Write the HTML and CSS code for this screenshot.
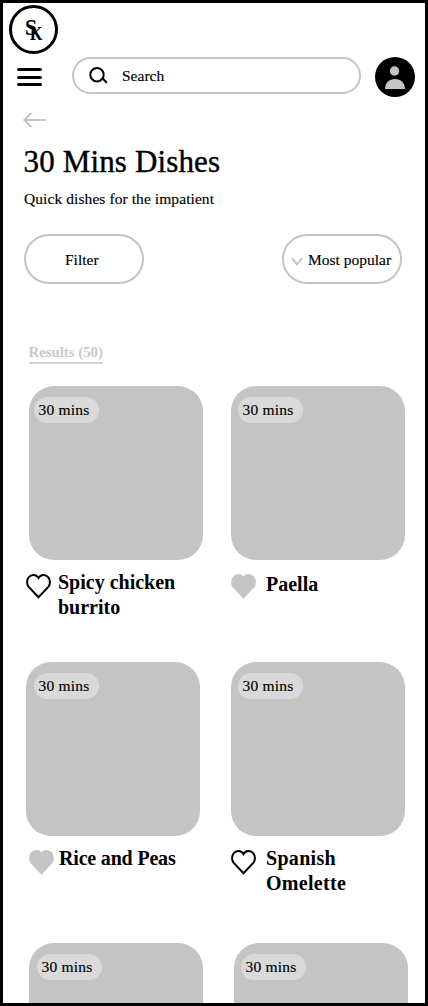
FILE: index.html
```html
<!DOCTYPE html>
<html lang="en">
<head>
<meta charset="utf-8">
<title>30 Mins Dishes</title>
<link rel="stylesheet" href="styles.css">
</head>
<body>
<svg class="defs" width="0" height="0">
  <symbol id="heart" viewBox="0 0 25 26"><path d="M12.5 24.3 2.5 13.6C.6 11.3.5 7 2.6 4.3 5.4 1.1 10.2 1.3 12.5 5c2.3-3.7 7.1-3.9 9.9-.7 2.1 2.7 2 7 .1 9.3Z"/></symbol>
</svg>
<div class="screen">
  <div class="logo"><span class="logo-s">S</span><span class="logo-k">K</span></div>
  <header class="topbar">
    <div class="menu"><i></i><i></i><i></i></div>
    <div class="search">
      <svg width="20" height="18" viewBox="0 0 20 18" fill="none" stroke="#000" stroke-width="2"><circle cx="8" cy="7.8" r="6.7"/><path d="M12.6 11.8h1.4l3.3 3.4" stroke-linecap="round"/></svg>
      <span>Search</span>
    </div>
    <svg class="avatar" width="40" height="40" viewBox="0 0 40 40"><circle cx="20" cy="20" r="20"/><g fill="#c4c4c4"><circle cx="19.5" cy="14" r="4.7"/><path d="M10 32c0-6 4-10 10-10s10 4 10 10Z"/></g></svg>
  </header>
  <svg class="back" width="24" height="16" viewBox="0 0 24 16" fill="none" stroke="#c4c4c4" stroke-width="2"><path d="M23 8H1.5M8.3 1 1.3 8l7 7"/></svg>
  <h1>30 Mins Dishes</h1>
  <p class="sub">Quick dishes for the impatient</p>
  <div class="controls">
    <div class="pill filter">Filter</div>
    <div class="pill sort"><svg width="12" height="9" viewBox="0 0 12 9" fill="none" stroke="#c4c4c4" stroke-width="2"><path d="m1 1 5 6.3L11 1"/></svg><span>Most popular</span></div>
  </div>
  <div class="results">Results (50)</div>
  <main class="grid">
    <article class="card">
      <div class="photo near"><span class="tag">30 mins</span></div>
      <div class="caption out"><svg class="heart"><use href="#heart"/></svg><h2>Spicy chicken<br>burrito</h2></div>
    </article>
    <article class="card">
      <div class="photo"><span class="tag">30 mins</span></div>
      <div class="caption wide low"><svg class="heart full"><use href="#heart"/></svg><h2>Paella</h2></div>
    </article>
    <article class="card left">
      <div class="photo far"><span class="tag">30 mins</span></div>
      <div class="caption in"><svg class="heart full"><use href="#heart"/></svg><h2 class="tight">Rice and Peas</h2></div>
    </article>
    <article class="card">
      <div class="photo"><span class="tag">30 mins</span></div>
      <div class="caption wide"><svg class="heart"><use href="#heart"/></svg><h2 class="loose">Spanish<br>Omelette</h2></div>
    </article>
    <article class="card">
      <div class="photo far"><span class="tag">30 mins</span></div>
    </article>
    <article class="card right">
      <div class="photo"><span class="tag">30 mins</span></div>
    </article>
  </main>
</div>
</body>
</html>
```
FILE: styles.css
```css
* { box-sizing: border-box; }
body { margin: 0; background: #fff; }
.defs { display: none; }
.screen {
  width: 428px;
  height: 1006px;
  border: 3px solid #000;
  overflow: hidden;
  display: flex;
  flex-direction: column;
  font: 15.5px/20px "Liberation Serif", serif;
  color: #000;
  -webkit-text-stroke: 0.15px currentColor;
}
.screen > * { flex-shrink: 0; }
.logo {
  position: relative;
  width: 49px;
  height: 49px;
  margin: 2px 0 0 6px;
  border: 3px solid #000;
  border-radius: 50%;
  font-weight: bold;
}
.logo-s { position: absolute; left: 13px; top: 7px; font-size: 24px; line-height: 25px; transform: scaleX(0.9); transform-origin: left; }
.logo-k { position: absolute; left: 17.5px; top: 16px; font-size: 18px; line-height: 20px; transform: scaleX(0.88); transform-origin: left; }
.topbar { display: flex; margin: 3px 10px 0 14px; height: 40px; }
.menu { display: flex; flex-direction: column; gap: 4.5px; width: 25px; margin: 11px 30px 0 0; }
.menu i { height: 3px; border-radius: 2px; background: #000; }
.search {
  display: flex;
  align-items: center;
  width: 289px;
  height: 37px;
  padding-left: 15px;
  border: 2px solid #c4c4c4;
  border-radius: 19px;
}
.search span { margin-left: 13px; }
.avatar { margin-left: 14px; }
.back { margin: 15px 0 0 20px; }
h1 { margin: 14px 0 0 20.5px; font-size: 31px; line-height: 40px; font-weight: normal; letter-spacing: 0.15px; -webkit-text-stroke: 0.4px currentColor; }
.sub { margin: 7px 0 0 21px; letter-spacing: 0.08px; }
.controls { display: flex; justify-content: space-between; margin: 25px 23px 0 21px; width: 378px; }
.pill {
  display: flex;
  align-items: center;
  width: 120px;
  height: 50px;
  padding-top: 2px;
  border: 2px solid #c4c4c4;
  border-radius: 25px;
}
.filter { padding-left: 39px; }
.sort { padding-left: 7px; white-space: nowrap; }
.sort span { margin-left: 5px; }
.sort svg { margin-top: 2px; flex: none; }
.results {
  width: 74px;
  height: 22px;
  margin: 58px 0 0 25.5px;
  border-bottom: 2px solid #d4d4d4;
  color: #c9c9c9;
  font-size: 14.8px;
  font-weight: bold;
  white-space: nowrap;
  -webkit-text-stroke: 0;
}
.grid {
  display: grid;
  grid-template-columns: 174px 174px;
  grid-template-rows: 276px 281px 174px;
  column-gap: 28px;
  margin: 22px 0 0 26px;
}
.left { margin-left: -3px; margin-right: 3px; }
.right { margin-left: 3px; margin-right: -3px; }
.photo { height: 174px; padding: 11px 0 0 7px; border-radius: 25px; background: #c4c4c4; }
.photo.near { padding-left: 5px; }
.photo.far { padding-left: 8px; }
.tag {
  display: block;
  width: 65px;
  height: 26px;
  padding-left: 4.5px;
  border-radius: 13px;
  background: #d9d9d9;
  line-height: 26px;
  letter-spacing: 0.2px;
}
.caption { display: flex; gap: 7px; }
.caption.out { margin-left: -3px; }
.caption.in { margin-left: 3px; gap: 5px; }
.caption.wide { gap: 10px; }
.heart { width: 25px; height: 26px; margin-top: 13px; flex: none; fill: none; stroke: #000; stroke-width: 2; }
.heart.full { fill: #c4c4c4; stroke: #c4c4c4; }
h2 { margin: 10px 0 0; font-size: 20px; line-height: 25px; white-space: nowrap; -webkit-text-stroke: 0; }
.low h2 { margin-top: 12px; }
.tight { letter-spacing: -0.18px; }
.loose { letter-spacing: 0.3px; }
```
